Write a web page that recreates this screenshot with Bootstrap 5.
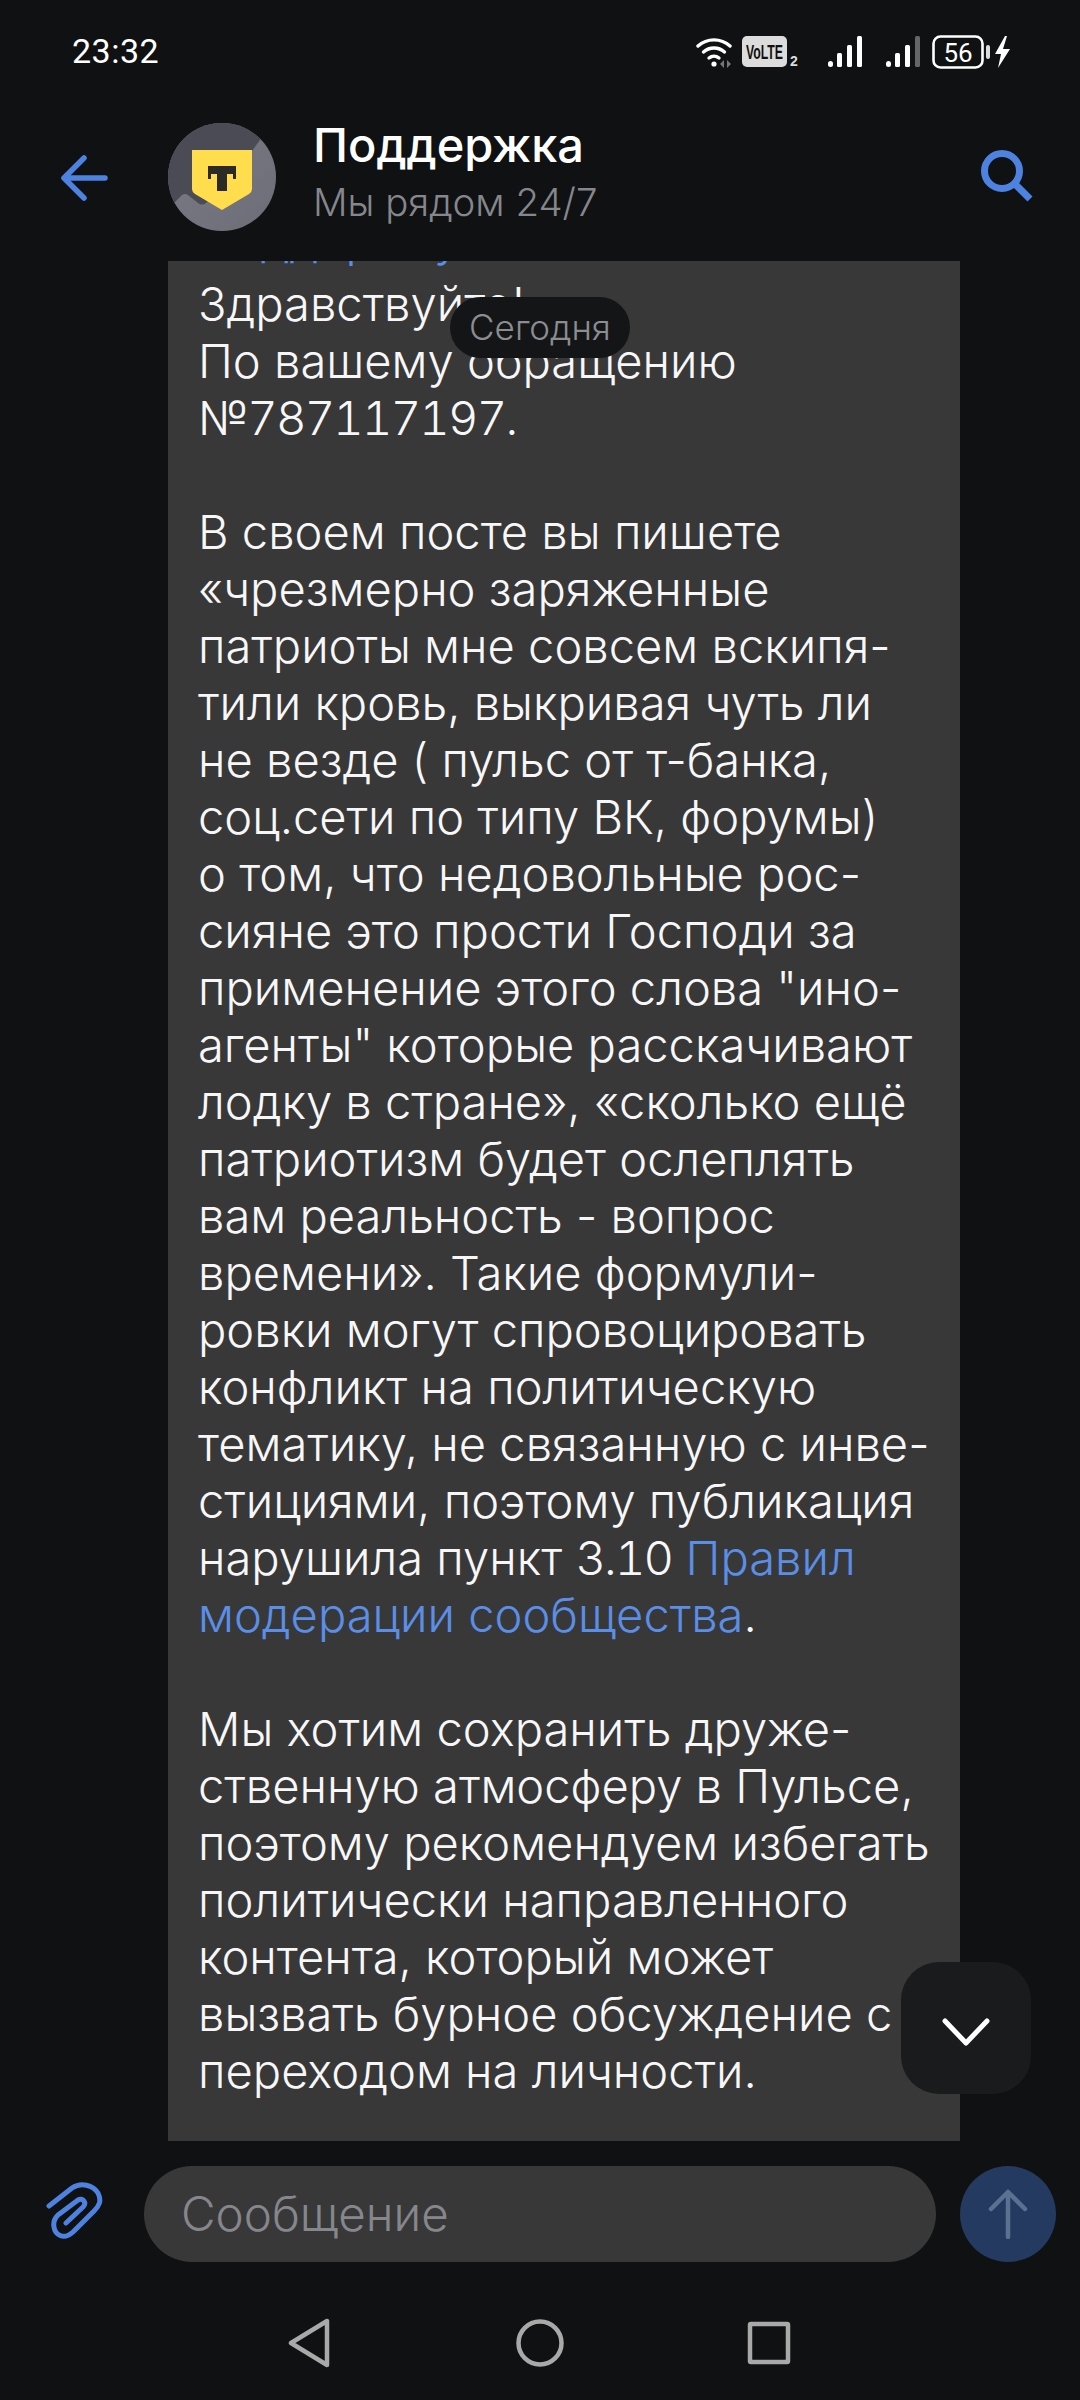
<!DOCTYPE html>
<html lang="ru">
  <head>
    <meta charset="UTF-8" />
    <meta name="viewport" content="width=device-width, initial-scale=1.0" />
    <title>Поддержка</title>
    <link
      href="https://cdn.jsdelivr.net/npm/bootstrap@5.3.2/dist/css/bootstrap.min.css"
      rel="stylesheet"
    />
    <style>
      body {
        background: #101112;
        font-family: Inter, Roboto, "Noto Sans", sans-serif;
        margin: 0;
      }
      .phone-screen {
        width: 1080px;
        height: 2400px;
        overflow: hidden;
      }
      .status-line {
        height: 100px;
        padding: 3px 68px 0 72px;
        color: #fff;
      }
      .status-time {
        font-family: Roboto, sans-serif;
        font-size: 34px;
        letter-spacing: 0.5px;
      }
      .status-icons {
        gap: 8px;
      }
      .signal-first {
        margin-left: 20px;
      }
      .chat-head {
        height: 161px;
        padding: 0 47px 0 61px;
      }
      .chat-avatar {
        width: 108px;
        height: 108px;
        margin-left: 60px;
        margin-top: -7px;
      }
      .chat-titles {
        margin-left: 37px;
        margin-top: -17px;
      }
      .chat-name {
        color: #fff;
        font-size: 47px;
        line-height: 60px;
        font-weight: 500;
      }
      .chat-sub {
        color: #85878c;
        font-size: 38.4px;
        line-height: 54px;
        font-weight: 300;
      }
      .head-back {
        margin-top: -6px;
      }
      .head-search {
        margin-top: -9px;
      }
      .chat-scroll {
        height: 1880px;
        overflow: hidden;
      }
      .msg-bubble {
        width: 792px;
        min-height: 1931px;
        margin-left: 168px;
        margin-top: -51px;
        background: #383838;
        color: #f7f7f7;
        padding-left: 30px;
        font-size: 47.1px;
        font-weight: 340;
        line-height: 57px;
      }
      .msg-clipped {
        margin-bottom: 8px;
      }
      .msg-link {
        color: #5b8ee6;
      }
      .msg-digits {
        font-variant-numeric: tabular-nums;
        letter-spacing: -1.8px;
      }
      .date-pill {
        top: 36px;
        left: 450px;
        width: 180px;
        height: 61px;
        border-radius: 31px;
        background: #141516;
        color: #8c8d90;
        font-size: 35px;
        font-weight: 300;
      }
      .down-btn {
        top: 1701px;
        left: 901px;
        width: 130px;
        height: 132px;
        border-radius: 38px;
        background: #1a1b1d;
      }
      .down-btn svg {
        margin-top: 8px;
      }
      .composer-row {
        height: 151px;
        padding: 25px 24px 0 45px;
      }
      .msg-input {
        width: 792px;
        height: 96px;
        margin-left: 41px;
        margin-right: 24px;
        border-radius: 48px;
        background: #383838;
        color: #85878c;
        font-size: 47.5px;
        font-weight: 300;
        padding-left: 37px;
      }
      .send-btn {
        width: 96px;
        height: 96px;
        border-radius: 50%;
        background: #253a60;
      }
      .nav-line {
        height: 108px;
      }
      .nav-back {
        left: 287px;
        top: 26px;
      }
      .nav-home {
        left: 515px;
        top: 26px;
      }
      .nav-recent {
        left: 747px;
        top: 29px;
      }
    </style>
  </head>
  <body>
    <div class="phone-screen d-flex flex-column position-relative">
      <!-- Status bar -->
      <div class="status-line d-flex justify-content-between align-items-center">
        <span class="status-time">23:32</span>
        <div class="status-icons d-flex align-items-center">
          <svg width="38" height="32" viewBox="0 0 38 32" fill="none" stroke="#fff" stroke-width="3.4" stroke-linecap="round">
            <path d="M2 10a24 24 0 0 1 32 0" />
            <path d="M7.5 16a16 16 0 0 1 21 0" />
            <path d="M13 22a8 8 0 0 1 10 0" />
            <circle cx="18" cy="28" r="2.6" fill="#fff" stroke="none" />
            <path d="M28 24l-4 4 4 4zM31 24l4 4-4 4z" fill="#777" stroke="none" />
          </svg>
          <svg width="58" height="32" viewBox="0 0 58 32">
            <rect x="0" y="0" width="45" height="31" rx="5" fill="#dcdcdc" />
            <text x="4" y="23" font-family="Liberation Sans" font-weight="700" font-size="21" fill="#111" textLength="37" lengthAdjust="spacingAndGlyphs">VoLTE</text>
            <text x="48" y="30" font-family="Liberation Sans" font-weight="700" font-size="14" fill="#ddd">2</text>
          </svg>
          <svg class="signal-first" width="34" height="31" viewBox="0 0 34 31" fill="#fff">
            <rect x="0" y="25" width="5" height="6" rx="2.5" />
            <rect x="9" y="17" width="5" height="14" rx="1.5" />
            <rect x="19" y="9" width="5" height="22" rx="1.5" />
            <rect x="29" y="0" width="5" height="31" rx="1.5" />
          </svg>
          <svg class="ms-3" width="34" height="31" viewBox="0 0 34 31" fill="#fff">
            <rect x="0" y="25" width="5" height="6" rx="2.5" />
            <rect x="9" y="17" width="5" height="14" rx="1.5" />
            <rect x="19" y="9" width="5" height="22" rx="1.5" />
            <rect x="29" y="0" width="5" height="31" rx="1.5" fill="#666" />
          </svg>
          <svg class="ms-1" width="80" height="34" viewBox="0 0 80 34" fill="none">
            <rect x="1.5" y="1.5" width="49" height="31" rx="7" stroke="#fff" stroke-width="2.6" />
            <text x="26" y="27" text-anchor="middle" font-family="Roboto" font-size="26" fill="#fff">56</text>
            <rect x="54" y="10" width="4" height="14" rx="2" fill="#ddd" />
            <path d="M73 1L63 19h6l-3 14 12-19h-7l4-13z" fill="#fff" />
          </svg>
        </div>
      </div>

      <!-- Header -->
      <div class="chat-head d-flex align-items-center">
        <svg class="head-back" width="47" height="46" viewBox="0 0 47 46" fill="none" stroke="#4d82e0" stroke-width="5.5" stroke-linecap="round" stroke-linejoin="round">
          <path d="M23 3L3 23l20 20M3 23h41" />
        </svg>
        <svg class="chat-avatar" viewBox="0 0 108 108">
          <defs>
            <linearGradient id="avatarLight" x1="0" y1="0" x2="1" y2="1">
              <stop offset="0" stop-color="#7b7c86" />
              <stop offset="1" stop-color="#6c6d76" />
            </linearGradient>
            <clipPath id="avatarClip"><circle cx="54" cy="54" r="54" /></clipPath>
          </defs>
          <g clip-path="url(#avatarClip)">
            <rect width="108" height="108" fill="url(#avatarLight)" />
            <path d="M92 17L60 60 38 80q-4 3-8 0l-10-8q-3-2-6 0L4 82 0 60V0h92z" fill="#4a4b54" />
          </g>
          <path d="M24 27h60v39q0 3-3 5L54 87 27 71q-3-2-3-5z" fill="#ffdd4d" />
          <rect x="40" y="43" width="28" height="8" fill="#2b2a26" />
          <rect x="40" y="43" width="3" height="13" fill="#2b2a26" />
          <rect x="65" y="43" width="3" height="13" fill="#2b2a26" />
          <rect x="49" y="43" width="10" height="25" fill="#2b2a26" />
        </svg>
        <div class="chat-titles">
          <div class="chat-name">Поддержка</div>
          <div class="chat-sub">Мы рядом 24/7</div>
        </div>
        <svg class="head-search ms-auto" width="52" height="54" viewBox="0 0 52 54" fill="none" stroke="#4d82e0" stroke-width="7">
          <circle cx="21" cy="22" r="17.5" />
          <path d="M35 36l14 14" />
        </svg>
      </div>

      <!-- Message -->
      <div class="position-relative">
        <div class="chat-scroll">
          <div class="msg-bubble">
            <div class="msg-clipped msg-link">Поддержку</div>
            Здравствуйте!<br />
            По вашему обращению<br />
            <span class="msg-digits">№787117197.</span><br />
            <br />
            В своем посте вы пишете<br />
            «чрезмерно заряженные<br />
            патриоты мне совсем вскипя-<br />
            тили кровь, выкривая чуть ли<br />
            не везде ( пульс от т-банка,<br />
            соц.сети по типу ВК, форумы)<br />
            о том, что недовольные рос-<br />
            сияне это прости Господи за<br />
            применение этого слова "ино-<br />
            агенты" которые расскачивают<br />
            лодку в стране», «сколько ещё<br />
            патриотизм будет ослеплять<br />
            вам реальность - вопрос<br />
            времени». Такие формули-<br />
            ровки могут спровоцировать<br />
            конфликт на политическую<br />
            тематику, не связанную с инве-<br />
            стициями, поэтому публикация<br />
            нарушила пункт <span class="msg-digits">3.10</span> <span class="msg-link">Правил</span><br />
            <span class="msg-link">модерации сообщества</span>.<br />
            <br />
            Мы хотим сохранить друже-<br />
            ственную атмосферу в Пульсе,<br />
            поэтому рекомендуем избегать<br />
            политически направленного<br />
            контента, который может<br />
            вызвать бурное обсуждение с<br />
            переходом на личности.
          </div>
        </div>
        <div class="date-pill position-absolute d-flex align-items-center justify-content-center">Сегодня</div>
        <div class="down-btn position-absolute d-flex align-items-center justify-content-center">
          <svg width="48" height="28" viewBox="0 0 48 28" fill="none" stroke="#fff" stroke-width="5" stroke-linecap="round" stroke-linejoin="round">
            <path d="M3 3l21 22L45 3" />
          </svg>
        </div>
      </div>

      <!-- Composer -->
      <div class="composer-row d-flex align-items-start">
        <svg class="mt-3" width="58" height="60" viewBox="0 0 58 60" fill="none" stroke="#4d82e0" stroke-width="5" stroke-linecap="round" stroke-linejoin="round">
          <path d="M4 24L27 6c9-6 21-3 26 5 4 8 1 13-4 18L28 50c-10 9-18 2-19-5-1-5 1-9 4-12l20-15c5-3 9 3 5 7L21 41" />
        </svg>
        <div class="msg-input d-flex align-items-center">Сообщение</div>
        <div class="send-btn d-flex align-items-center justify-content-center">
          <svg width="40" height="50" viewBox="0 0 40 50" fill="none" stroke="#5c7092" stroke-width="4.5" stroke-linecap="round" stroke-linejoin="round">
            <path d="M20 48V3M3 20L20 3l17 17" />
          </svg>
        </div>
      </div>

      <!-- Navigation bar -->
      <div class="nav-line position-relative">
        <svg class="nav-back position-absolute" width="44" height="50" viewBox="0 0 44 50" fill="none" stroke="#a9a9a9" stroke-width="4.5" stroke-linejoin="round">
          <path d="M40 3v44L4 25z" />
        </svg>
        <svg class="nav-home position-absolute" width="50" height="50" viewBox="0 0 50 50" fill="none" stroke="#a9a9a9" stroke-width="4.5">
          <circle cx="25" cy="25" r="21.5" />
        </svg>
        <svg class="nav-recent position-absolute" width="44" height="44" viewBox="0 0 44 44" fill="none" stroke="#a9a9a9" stroke-width="4.5" stroke-linejoin="round">
          <rect x="3" y="3" width="38" height="38" rx="1" />
        </svg>
      </div>
    </div>
    <script src="https://cdn.jsdelivr.net/npm/bootstrap@5.3.2/dist/js/bootstrap.bundle.min.js"></script>
  </body>
</html>
